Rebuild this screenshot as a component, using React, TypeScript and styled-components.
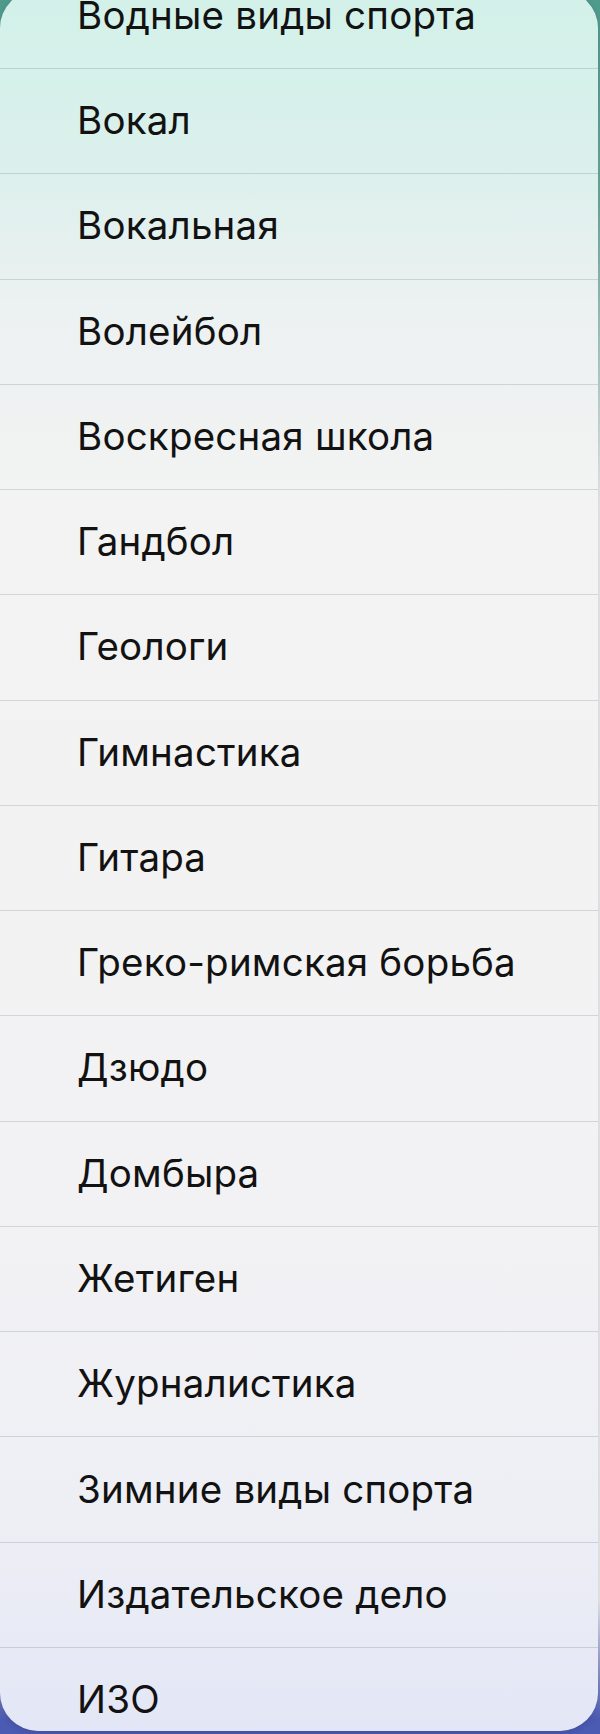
import styled, { createGlobalStyle } from "styled-components";

const GlobalStyle = createGlobalStyle`
  html, body {
    margin: 0;
    padding: 0;
  }
  body {
    width: 600px;
    height: 1734px;
    overflow: hidden;
    background: linear-gradient(
      180deg,
      #4f9a8b 0px,
      #6aa89c 200px,
      #e9e9ec 500px,
      #e9e9ec 1600px,
      #4b5ab2 1720px
    );
    font-family: Inter, Roboto, "Noto Sans", "Liberation Sans", sans-serif;
  }
`;

const Screen = styled.div`
  height: 1734px;
  display: flex;
  flex-direction: column;
  overflow: hidden;
`;

const Sheet = styled.div`
  margin-top: -10px;
  margin-right: 2px;
  height: 1741px;
  border-radius: 38px;
  overflow: hidden;
  background: linear-gradient(
    180deg,
    #d2f1e9 0%,
    #dbf0ec 10%,
    #ecf1f1 18%,
    #f3f3f3 30%,
    #f2f2f4 70%,
    #eeeff5 88%,
    #e3e6f6 100%
  );
  box-shadow: 0 2px 6px rgba(0, 0, 0, 0.12);
`;

const List = styled.ul`
  list-style: none;
  margin: -26.3px 0 0 0;
  padding: 0;
`;

const Row = styled.li`
  box-sizing: border-box;
  height: 105.27px;
  display: flex;
  align-items: center;
  padding-left: 77px;
  padding-bottom: 2px;
  border-bottom: 1px solid rgba(40, 60, 70, 0.16);
  font-size: 38.5px;
  font-weight: 400;
  color: #121212;
  letter-spacing: 0.2px;
  white-space: nowrap;
`;

const items = [
  "Водные виды спорта",
  "Вокал",
  "Вокальная",
  "Волейбол",
  "Воскресная школа",
  "Гандбол",
  "Геологи",
  "Гимнастика",
  "Гитара",
  "Греко-римская борьба",
  "Дзюдо",
  "Домбыра",
  "Жетиген",
  "Журналистика",
  "Зимние виды спорта",
  "Издательское дело",
  "ИЗО",
];

export default function App() {
  return (
    <>
      <GlobalStyle />
      <Screen>
        <Sheet>
          <List>
            {items.map((name) => (
              <Row key={name}>{name}</Row>
            ))}
          </List>
        </Sheet>
      </Screen>
    </>
  );
}
